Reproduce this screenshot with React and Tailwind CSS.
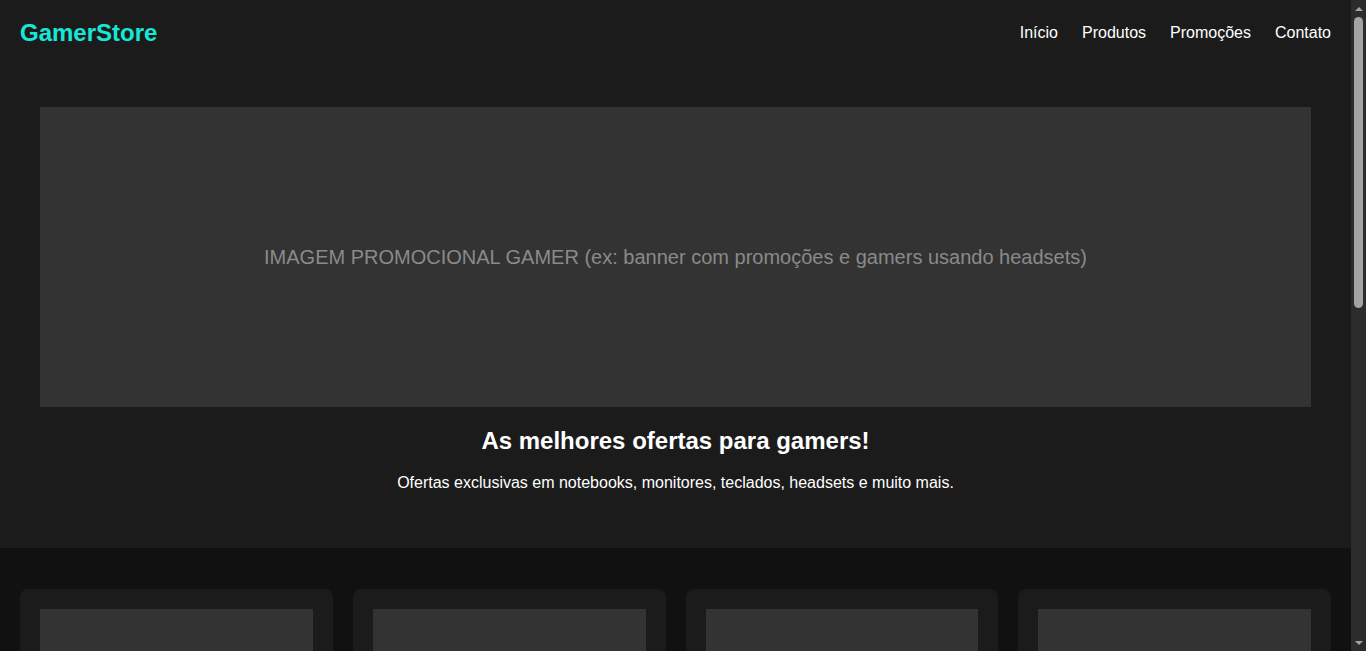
import React from 'react'

export default function App() {
  return (
    <div className="h-screen flex overflow-hidden bg-[#111111] text-white font-['Liberation_Sans',Arial,sans-serif]">
      <main className="flex-1 min-w-0 overflow-hidden">
        {/* Header */}
        <header className="h-[66px] bg-[#1b1b1b] px-5 flex items-center justify-between">
          <h1 className="text-[24px] font-bold text-[#16e8d8]">GamerStore</h1>
          <nav className="flex gap-6 text-[16px]">
            <a href="#">Início</a>
            <a href="#">Produtos</a>
            <a href="#">Promoções</a>
            <a href="#">Contato</a>
          </nav>
        </header>

        {/* Hero */}
        <section className="bg-[#1b1b1b] px-10 pt-[41px] pb-[56px] text-center">
          <div className="h-[300px] bg-[#333333] flex items-center justify-center">
            <span className="text-[20px] text-[#8a8a8a]">
              IMAGEM PROMOCIONAL GAMER (ex: banner com promoções e gamers usando headsets)
            </span>
          </div>
          <h2 className="mt-5 text-[24px] leading-[28px] font-bold">As melhores ofertas para gamers!</h2>
          <p className="mt-[19px] text-[16px] leading-[18px]">
            Ofertas exclusivas em notebooks, monitores, teclados, headsets e muito mais.
          </p>
        </section>

        {/* Produtos */}
        <section className="px-5 pt-[41px] pb-10 grid grid-cols-4 gap-5">
          {[0, 1, 2, 3].map(idx => (
            <div key={idx} className="bg-[#1b1b1b] rounded-lg p-5">
              <div className="h-[180px] bg-[#333333]"></div>
            </div>
          ))}
        </section>
      </main>

      {/* scrollbar */}
      <aside className="w-[15px] shrink-0 bg-[#2c2c2c] flex flex-col items-center">
        <div className="h-[17px] flex items-center justify-center">
          <div className="w-0 h-0 border-l-[4px] border-r-[4px] border-b-[4px] border-l-transparent border-r-transparent border-b-[#a3a3a3]"></div>
        </div>
        <div className="w-[9px] h-[291px] rounded-full bg-[#a3a3a3]"></div>
        <div className="flex-1"></div>
        <div className="h-[17px] flex items-center justify-center">
          <div className="w-0 h-0 border-l-[4px] border-r-[4px] border-t-[4px] border-l-transparent border-r-transparent border-t-[#a3a3a3]"></div>
        </div>
      </aside>
    </div>
  )
}
